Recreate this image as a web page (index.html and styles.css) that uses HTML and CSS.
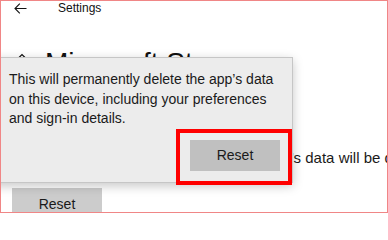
FILE: index.html
```html
<!DOCTYPE html>
<html>
<head>
<meta charset="utf-8">
<link rel="stylesheet" href="styles.css">
</head>
<body>
<div class="frame">
  <div class="topbar">
    <svg class="back" width="13" height="11" viewBox="0 0 13 11"><path d="M12.5 5.5H1M5.8 0.7L1 5.5l4.8 4.8" fill="none" stroke="#111" stroke-width="1.1"/></svg>
    <span class="app-title">Settings</span>
  </div>
  <div class="title-row">
    <svg class="home" width="12" height="12" viewBox="0 0 12 12"><path d="M1 6.5L6 1.5l5 5M2.5 5v6h7V5" fill="none" stroke="#111" stroke-width="1.2"/></svg>
    <h1 class="page-title">Microsoft Store</h1>
  </div>
  <p class="desc">If this app isn’t working right, reset it. The app’s data will be deleted.</p>
  <button class="btn btn-page">Reset</button>

  <div class="flyout">
    <p class="flyout-text">This will permanently delete the app’s data on this device, including your preferences and sign-in details.</p>
    <div class="flyout-actions">
      <button class="btn btn-flyout">Reset</button>
    </div>
  </div>
  <div class="highlight"></div>
</div>
</body>
</html>
```

FILE: styles.css
```css
html, body {
  margin: 0;
  padding: 0;
  background: #ffffff;
}
.frame {
  position: relative;
  width: 388px;
  height: 213px;
  box-sizing: border-box;
  border: 1px solid #f08686;
  overflow: hidden;
  background: #ffffff;
  font-family: "Liberation Sans", Arial, sans-serif;
  color: #1a1a1a;
}
.topbar {
  display: flex;
  align-items: center;
  height: 14px;
  padding-left: 13px;
}
.back {
  display: block;
  flex: none;
}
.app-title {
  font-size: 12px;
  line-height: 14px;
  margin-left: 31px;
  color: #111;
}
.title-row {
  display: flex;
  align-items: flex-start;
  margin-top: 34px;
  padding-left: 15px;
}
.home {
  display: block;
  flex: none;
  margin-top: 4px;
}
.page-title {
  margin: 0 0 0 17px;
  font-size: 28px;
  line-height: 28px;
  font-weight: normal;
  white-space: nowrap;
  color: #111;
}
.desc {
  margin: 71px 0 0 -12px;
  font-size: 15px;
  line-height: 19.5px;
  white-space: nowrap;
}
.btn {
  display: block;
  border: none;
  margin: 0;
  padding: 0;
  font-family: "Liberation Sans", Arial, sans-serif;
  font-size: 14px;
  color: #1a1a1a;
  text-align: center;
}
.btn-page {
  margin: 20px 0 0 11px;
  width: 90px;
  height: 32px;
  background: #cccccc;
}
.flyout {
  position: absolute;
  top: 56px;
  left: -20px;
  width: 312px;
  height: 126px;
  box-sizing: border-box;
  border: 1px solid #c6c6c6;
  background: #ececec;
  box-shadow: 0 3px 10px rgba(0, 0, 0, 0.22);
  padding: 12px 12px 0 27px;
}
.flyout-text {
  margin: 0;
  font-size: 14px;
  line-height: 19.5px;
  color: #1a1a1a;
}
.flyout-actions {
  display: flex;
  justify-content: flex-end;
  margin-top: 11px;
}
.btn-flyout {
  width: 90px;
  height: 31px;
  background: #c0c0c0;
}
.highlight {
  position: absolute;
  top: 128px;
  left: 175px;
  width: 116px;
  height: 56px;
  box-sizing: border-box;
  border: 4px solid #ff0000;
}
```
